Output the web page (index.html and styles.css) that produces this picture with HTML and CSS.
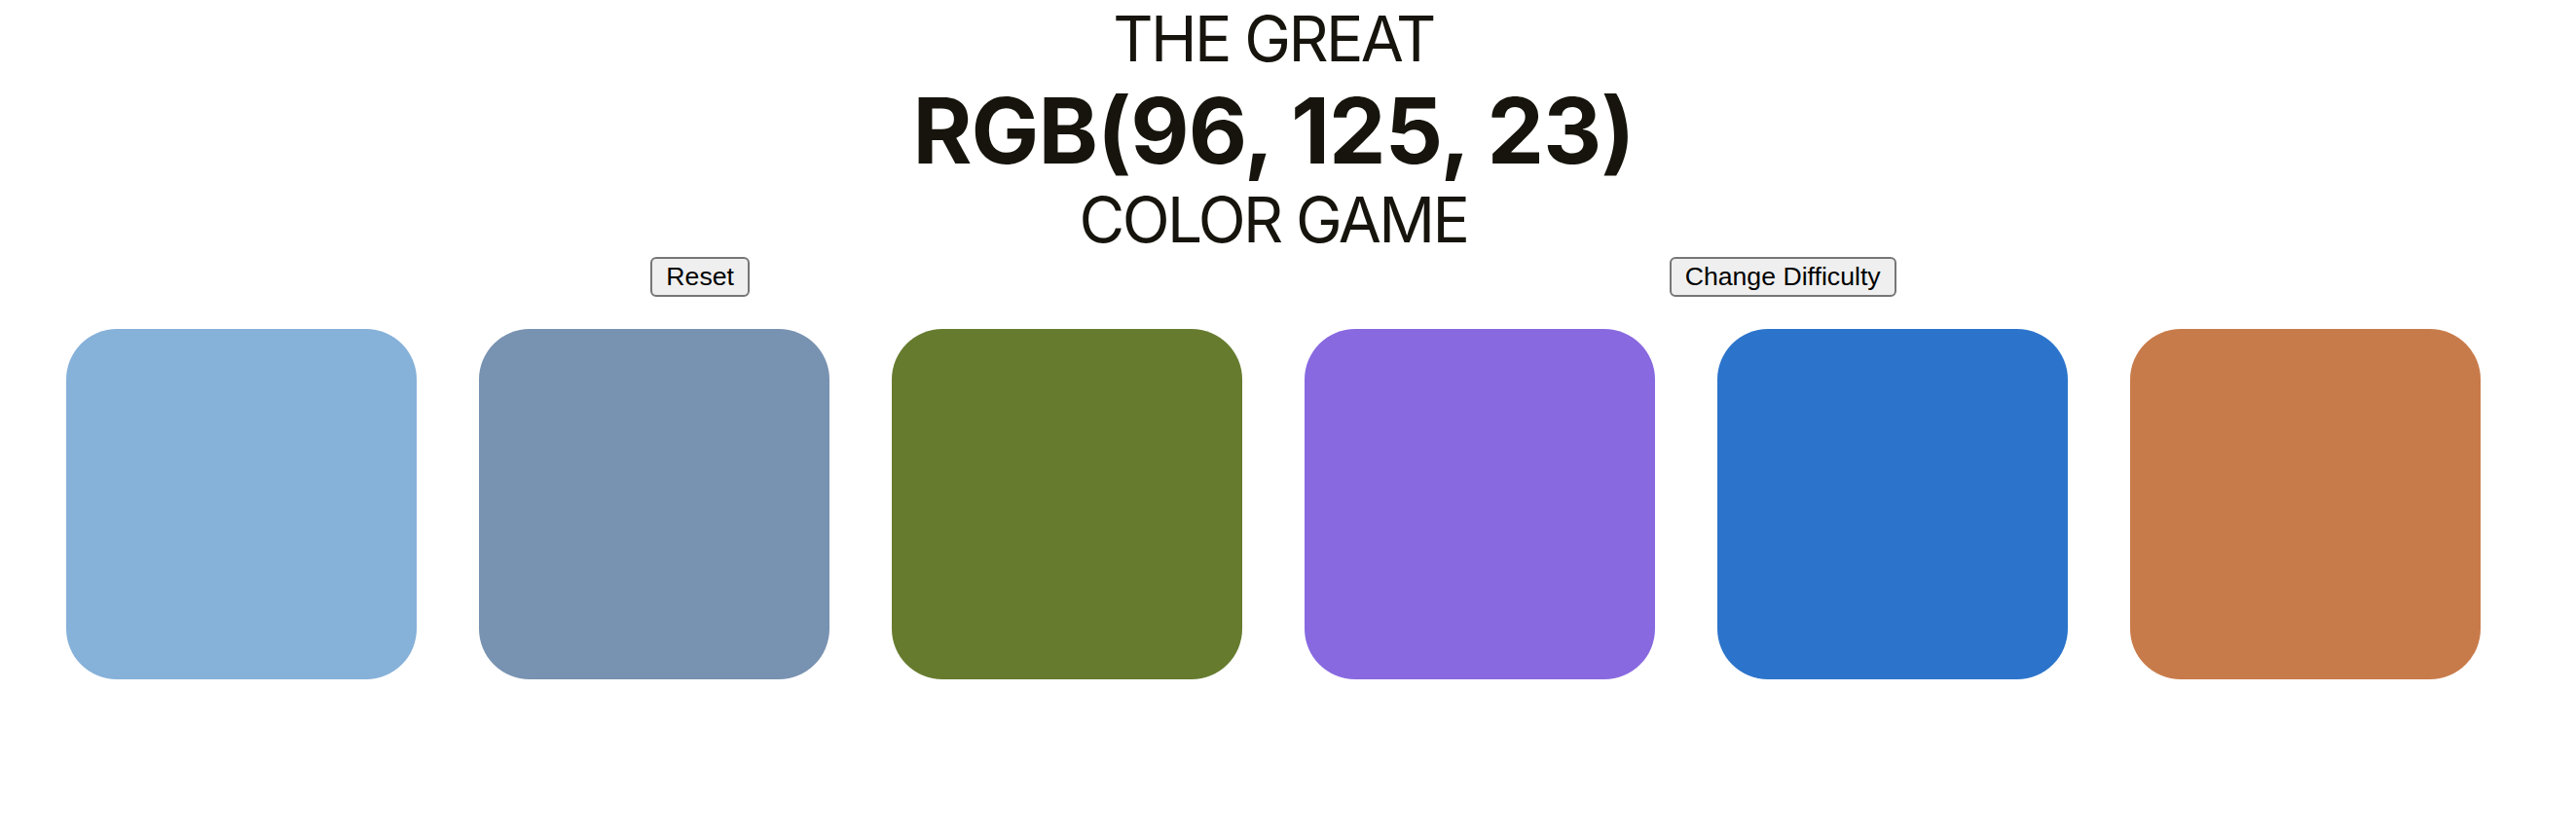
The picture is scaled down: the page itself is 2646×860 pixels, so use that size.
FILE: index.html
```html
<!DOCTYPE html>
<html lang="en">
<head>
<meta charset="utf-8">
<title>The Great RGB Color Game</title>
<link rel="stylesheet" href="styles.css">
</head>
<body>
<div class="page">
  <header class="title">
    <div class="line small">THE GREAT</div>
    <div class="line big">RGB(96, 125, 23)</div>
    <div class="line small last">COLOR GAME</div>
  </header>
  <div class="controls">
    <button class="btn">Reset</button>
    <button class="btn">Change Difficulty</button>
  </div>
  <div class="board">
    <div class="square sq1"></div>
    <div class="square sq2"></div>
    <div class="square sq3"></div>
    <div class="square sq4"></div>
    <div class="square sq5"></div>
    <div class="square sq6"></div>
  </div>
</div>
</body>
</html>
```
FILE: styles.css
```css
html, body {
  margin: 0;
  padding: 0;
  background: #ffffff;
}
.page {
  width: 2616px;
}
.title {
  text-align: center;
  color: #16140c;
  font-family: Inter, "Noto Sans", sans-serif;
}
.line {
  white-space: nowrap;
}
.small {
  font-size: 64px;
  font-weight: 400;
  line-height: 80px;
  letter-spacing: -2.6px;
}
.small.last {
  line-height: 76px;
}
.big {
  font-size: 93px;
  font-weight: 700;
  line-height: 108px;
  letter-spacing: -0.9px;
}
.controls {
  width: 2224px;
  margin: 0 auto;
  display: flex;
  justify-content: space-around;
  align-items: center;
}
.btn {
  font-family: "Liberation Sans", Arial, sans-serif;
  font-size: 26.67px;
  color: #000000;
  background: #efefef;
  border: 2px solid #767676;
  border-radius: 6px;
  height: 41px;
  padding: 0 14px;
  margin: 0;
  line-height: 1;
}
.board {
  display: flex;
  justify-content: center;
  margin-top: 33px;
}
.square {
  width: 360px;
  height: 360px;
  margin: 0 32px;
  border-radius: 52px;
  flex: none;
}
.sq1 { background: #86b1d9; }
.sq2 { background: #7892b1; }
.sq3 { background: #667b2e; }
.sq4 { background: #8869e0; }
.sq5 { background: #2c74cb; }
.sq6 { background: #c87b4a; }
```
